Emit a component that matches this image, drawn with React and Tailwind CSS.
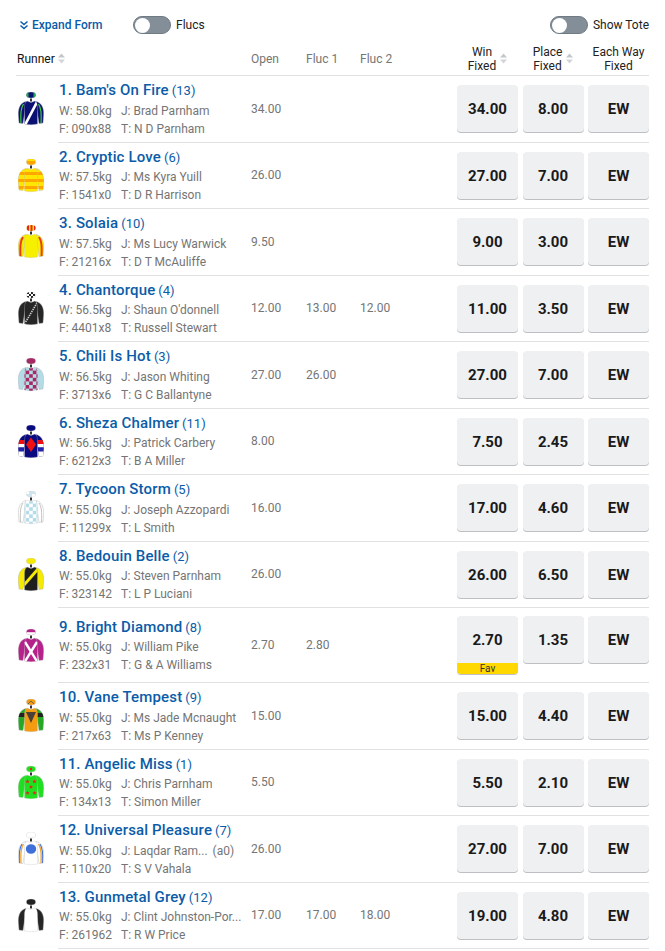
import React from "react";

const SLEEVE = "M8,9.5 C3,10.5 0.3,15 0.3,22 L1,31 L5,31.5 L7,18 Z";
const BODY = "M9,9 L13,10.5 L17,9 C18.5,10 19.5,12 19.5,15 L19.5,32 Q13,33.6 6.5,32 L6.5,15 C6.5,12 7.5,10 9,9 Z";

// check pattern for the jacket
const checks = (color) => {
  const cells = [];
  for (let y = 0; y < 7; y++) {
    for (let x = 0; x < 6; x++) {
      if ((x + y) % 2 === 0) {
        cells.push(<rect key={`${x}-${y}`} x={4 + x * 3.6} y={9 + y * 3.6} width="3.6" height="3.6" fill={color} />);
      }
    }
  }
  return cells;
};

const star = (cx, cy, key) => {
  const pts = [];
  for (let i = 0; i < 10; i++) {
    const r = i % 2 === 0 ? 2.3 : 1;
    const a = -Math.PI / 2 + (i * Math.PI) / 5;
    pts.push(`${cx + r * Math.cos(a)},${cy + r * Math.sin(a)}`);
  }
  return <polygon key={key} points={pts.join(" ")} fill="#e8231f" />;
};

const Silk = ({ id, cap, capTop, body, sleeve, bodyArt, sleeveArt }) => (
  <svg width="26" height="34" viewBox="0 0 26 34" className="shrink-0">
    <defs>
      <clipPath id={`body-${id}`}>
        <path d={BODY} />
      </clipPath>
      <clipPath id={`sleeve-${id}`}>
        <path d={SLEEVE} />
      </clipPath>
      <clipPath id={`cap-${id}`}>
        <ellipse cx="13" cy="3" rx="4.6" ry="3" />
      </clipPath>
    </defs>
    <ellipse cx="13" cy="3" rx="4.6" ry="3" fill={cap} stroke="#bbb" strokeWidth="0.3" />
    <g clipPath={`url(#cap-${id})`}>{capTop}</g>
    <rect x="12" y="6.5" width="2" height="3" fill="#333" />
    {[0, 1].map((side) => (
      <g key={side} transform={side ? "translate(26,0) scale(-1,1)" : undefined}>
        <path d={SLEEVE} fill={sleeve} stroke="#aaa" strokeWidth="0.4" />
        <g clipPath={`url(#sleeve-${id})`}>{sleeveArt}</g>
      </g>
    ))}
    <path d={BODY} fill={body} stroke="#bbb" strokeWidth="0.3" />
    <g clipPath={`url(#body-${id})`}>{bodyArt}</g>
  </svg>
);

const silks = {
  1: {
    cap: "#0a1172",
    capTop: <><rect x="8" y="0" width="2.5" height="6" fill="#22b14c" /><rect x="15.5" y="0" width="2.5" height="6" fill="#22b14c" /></>,
    body: "#0a1172",
    sleeve: "#0a1172",
    bodyArt: <line x1="19" y1="10" x2="7" y2="33" stroke="#fff" strokeWidth="2.6" />,
    sleeveArt: <path d="M5.5,12 C3,16 2.5,20 3,32" stroke="#3ecf3a" strokeWidth="1.2" fill="none" />,
  },
  2: {
    cap: "#ffa500",
    capTop: <rect x="8" y="0" width="10" height="2" fill="#ffe000" />,
    body: "#ffe600",
    sleeve: "#ffe600",
    bodyArt: <><rect x="4" y="13" width="18" height="3" fill="#ffa500" /><rect x="4" y="20" width="18" height="3" fill="#ffa500" /><rect x="4" y="27" width="18" height="3" fill="#ffa500" /></>,
    sleeveArt: <><rect x="0" y="13" width="8" height="3" fill="#ffa500" /><rect x="0" y="20" width="8" height="3" fill="#ffa500" /><rect x="0" y="27" width="8" height="3" fill="#ffa500" /></>,
  },
  3: {
    cap: "#ffe600",
    capTop: <><rect x="9" y="0" width="2" height="6" fill="#e8231f" /><rect x="12.5" y="0" width="2" height="6" fill="#e8231f" /><rect x="16" y="0" width="2" height="6" fill="#e8231f" /></>,
    body: "#f6f000",
    sleeve: "#f6f000",
    sleeveArt: <path d="M5,12 C2.5,16 2,20 2.5,32" stroke="#ee3a10" strokeWidth="2" fill="none" />,
  },
  4: {
    cap: "#fff",
    capTop: <><rect x="9" y="0" width="2" height="2" fill="#222" /><rect x="13" y="0" width="2" height="2" fill="#222" /><rect x="11" y="2" width="2" height="2" fill="#222" /><rect x="15" y="2" width="2" height="2" fill="#222" /><rect x="9" y="4" width="2" height="2" fill="#222" /><rect x="13" y="4" width="2" height="2" fill="#222" /></>,
    body: "#262626",
    sleeve: "#262626",
    bodyArt: <line x1="19" y1="11" x2="7" y2="31" stroke="#ccc" strokeWidth="1.6" strokeDasharray="1.4 0.9" />,
  },
  5: {
    cap: "#a52a63",
    body: "#b4dbe8",
    sleeve: "#b4dbe8",
    bodyArt: checks("#a52a63"),
  },
  6: {
    cap: "#0a0a80",
    body: "#0a0a80",
    sleeve: "#0a0a80",
    bodyArt: <polygon points="13,12.5 18,19.5 13,27 8,19.5" fill="#f01010" />,
    sleeveArt: <><rect x="0" y="15" width="8" height="4" fill="#f01010" /><rect x="0" y="19" width="8" height="3.5" fill="#fff" /><rect x="0" y="22.5" width="8" height="4" fill="#2222aa" /><rect x="0" y="26.5" width="8" height="6" fill="#fff" /></>,
  },
  7: {
    cap: "#cfe6f2",
    capTop: <><rect x="8" y="0" width="3" height="3" fill="#fff" /><rect x="14" y="3" width="3" height="3" fill="#fff" /></>,
    body: "#fff",
    sleeve: "#fff",
    bodyArt: checks("#b4dbe8"),
    sleeveArt: <path d="M5,12 C2.5,16 2,20 2.5,32" stroke="#bbb" strokeWidth="0.9" fill="none" />,
  },
  8: {
    cap: "#f6ea00",
    body: "#1e1e1e",
    sleeve: "#f6ea00",
    bodyArt: <line x1="20" y1="11" x2="6" y2="27" stroke="#f6ea00" strokeWidth="2.8" />,
  },
  9: {
    cap: "#b5238a",
    capTop: <rect x="8" y="3.2" width="10" height="3" fill="#fff" />,
    body: "#b5238a",
    sleeve: "#b5238a",
    bodyArt: <><line x1="7" y1="13" x2="20" y2="34" stroke="#fff" strokeWidth="2.4" /><line x1="19" y1="13" x2="6" y2="34" stroke="#fff" strokeWidth="2.4" /></>,
  },
  10: {
    cap: "#f39c12",
    capTop: <path d="M9,6 L13,2 L17,6" stroke="#555" strokeWidth="0.8" fill="none" />,
    body: "#f39c12",
    sleeve: "#26a826",
    bodyArt: <polygon points="8,13 18,13 13,24" fill="#4a4035" />,
    sleeveArt: <rect x="0" y="14" width="8" height="4" fill="#222" />,
  },
  11: {
    cap: "#1fe01f",
    capTop: <circle cx="13" cy="3" r="1.2" fill="#e8231f" />,
    body: "#1fe01f",
    sleeve: "#1fe01f",
    bodyArt: [star(9.5, 15.5, "a"), star(16.5, 15.5, "b"), star(13, 21, "c"), star(9.5, 27, "d"), star(16.5, 27, "e")],
  },
  12: {
    cap: "#fff",
    body: "#fff",
    sleeve: "#fff",
    bodyArt: <ellipse cx="13" cy="17" rx="5.2" ry="4.8" fill="#3f6fd8" />,
    sleeveArt: <><path d="M5.5,12 C3,16 2.5,20 3,32" stroke="#f3a024" strokeWidth="1.3" fill="none" /><path d="M4,12 C1.5,16 1,20 1.4,32" stroke="#3f6fd8" strokeWidth="1.1" fill="none" /></>,
  },
  13: {
    cap: "#222",
    body: "#fff",
    sleeve: "#262626",
  },
};

const runners = [
  { no: 1, name: "Bam's On Fire", barrier: 13, w: "58.0kg", j: "Brad Parnham", f: "090x88", t: "N D Parnham", open: "34.00", win: "34.00", place: "8.00" },
  { no: 2, name: "Cryptic Love", barrier: 6, w: "57.5kg", j: "Ms Kyra Yuill", f: "1541x0", t: "D R Harrison", open: "26.00", win: "27.00", place: "7.00" },
  { no: 3, name: "Solaia", barrier: 10, w: "57.5kg", j: "Ms Lucy Warwick", f: "21216x", t: "D T McAuliffe", open: "9.50", win: "9.00", place: "3.00" },
  { no: 4, name: "Chantorque", barrier: 4, w: "56.5kg", j: "Shaun O'donnell", f: "4401x8", t: "Russell Stewart", open: "12.00", fluc1: "13.00", fluc2: "12.00", win: "11.00", place: "3.50" },
  { no: 5, name: "Chili Is Hot", barrier: 3, w: "56.5kg", j: "Jason Whiting", f: "3713x6", t: "G C Ballantyne", open: "27.00", fluc1: "26.00", win: "27.00", place: "7.00" },
  { no: 6, name: "Sheza Chalmer", barrier: 11, w: "56.5kg", j: "Patrick Carbery", f: "6212x3", t: "B A Miller", open: "8.00", win: "7.50", place: "2.45" },
  { no: 7, name: "Tycoon Storm", barrier: 5, w: "55.0kg", j: "Joseph Azzopardi", f: "11299x", t: "L Smith", open: "16.00", win: "17.00", place: "4.60" },
  { no: 8, name: "Bedouin Belle", barrier: 2, w: "55.0kg", j: "Steven Parnham", f: "323142", t: "L P Luciani", open: "26.00", win: "26.00", place: "6.50" },
  { no: 9, name: "Bright Diamond", barrier: 8, w: "55.0kg", j: "William Pike", f: "232x31", t: "G & A Williams", open: "2.70", fluc1: "2.80", win: "2.70", place: "1.35", fav: true },
  { no: 10, name: "Vane Tempest", barrier: 9, w: "55.0kg", j: "Ms Jade Mcnaught", f: "217x63", t: "Ms P Kenney", open: "15.00", win: "15.00", place: "4.40" },
  { no: 11, name: "Angelic Miss", barrier: 1, w: "55.0kg", j: "Chris Parnham", f: "134x13", t: "Simon Miller", open: "5.50", win: "5.50", place: "2.10" },
  { no: 12, name: "Universal Pleasure", barrier: 7, w: "55.0kg", j: "Laqdar Ram...", extra: "(a0)", f: "110x20", t: "S V Vahala", open: "26.00", win: "27.00", place: "7.00" },
  { no: 13, name: "Gunmetal Grey", barrier: 12, w: "55.0kg", j: "Clint Johnston-Por...", f: "261962", t: "R W Price", open: "17.00", fluc1: "17.00", fluc2: "18.00", win: "19.00", place: "4.80" },
];

const SortIcon = () => (
  <svg width="7" height="11" viewBox="0 0 7 11" className="shrink-0">
    <polygon points="3.5,0.5 7,4.5 0,4.5" fill="#c4c7cb" />
    <polygon points="0,6.5 7,6.5 3.5,10.5" fill="#d3d5d8" />
  </svg>
);

const Toggle = ({ label }) => (
  <div className="flex items-center gap-[5px]">
    <div className="flex h-[18px] w-[38px] items-center rounded-full border border-[#6f7a84] bg-[#838e98] pl-px">
      <div className="h-[15px] w-[15px] rounded-full bg-white" />
    </div>
    <span className="text-[12px] text-[#222]">{label}</span>
  </div>
);

const OddsButton = ({ value, fav }) => (
  <button className="flex w-[61px] flex-col overflow-hidden rounded-[4px] bg-[#eff0f2] shadow-[0_1px_0_#bdbfc2]">
    <span className="flex h-[47px] w-full items-center justify-center pt-[2px] text-[15px] font-bold text-[#1a1a1a]">{value}</span>
    {fav && <span className="h-[11px] w-full bg-[#ffd800] text-[10px] leading-[11px] text-[#333]">Fav</span>}
  </button>
);

const RunnerRow = ({ r }) => (
  <div className="flex items-stretch">
    <div className="flex w-[42px] shrink-0 items-center pl-[2px]">
      <Silk id={r.no} {...silks[r.no]} />
    </div>
    <div className="flex flex-1 border-b border-[#e1e1e1]">
      <div className="flex w-[193px] shrink-0 flex-col justify-center pb-px pl-px">
        <div className="flex items-baseline pt-[1.5px] leading-[20px] text-[#0b5ca8]">
          <span className="text-[15px] font-medium tracking-[0.15px]">{r.no}. {r.name}</span>
          <span className="ml-[3px] text-[13px]">({r.barrier})</span>
        </div>
        <div className="mt-[0.5px] flex text-[12px] leading-[18px] text-[#757575]">
          <span className="w-[62px] shrink-0">W: {r.w}</span>
          <span className="whitespace-nowrap">J: {r.j}</span>
          {r.extra && <span className="ml-[5px]">{r.extra}</span>}
        </div>
        <div className="flex text-[12px] leading-[18px] text-[#757575]">
          <span className="w-[62px] shrink-0">F: {r.f}</span>
          <span className="whitespace-nowrap">T: {r.t}</span>
        </div>
      </div>
      <div className="flex w-[55px] shrink-0 items-center text-[12px] text-[#757575]">{r.open}</div>
      <div className="flex w-[54px] shrink-0 items-center text-[12px] text-[#757575]">{r.fluc1}</div>
      <div className="flex w-[97px] shrink-0 items-center text-[12px] text-[#757575]">{r.fluc2}</div>
      <div className={`flex items-start gap-[4.5px] ${r.fav ? "pb-[8px] pt-[8px]" : "pb-[9.5px] pt-[9px]"}`}>
        <OddsButton value={r.win} fav={r.fav} />
        <OddsButton value={r.place} />
        <OddsButton value="EW" />
      </div>
    </div>
  </div>
);

export default function App() {
  return (
    <div className="w-[665px] bg-white pl-[16px] pr-[16px] font-['Roboto',sans-serif]">
      <div className="flex h-[44px] items-center pt-[6px]">
        <div className="flex w-[117px] items-center gap-[3px] pl-[3px] text-[12px] font-medium text-[#0b5ca8]">
          <svg width="10" height="10" viewBox="0 0 10 10" fill="none" stroke="#0b5ca8" strokeWidth="1.5">
            <path d="M1.5,1.5 L5,4.5 L8.5,1.5" />
            <path d="M1.5,5.5 L5,8.5 L8.5,5.5" />
          </svg>
          <span>Expand Form</span>
        </div>
        <Toggle label="Flucs" />
        <div className="ml-auto">
          <Toggle label="Show Tote" />
        </div>
      </div>

      <div className="flex h-[32px] items-center border-b border-[#e1e1e1] pb-[2px] text-[12px] leading-[14px]">
        <div className="flex w-[235px] shrink-0 items-center gap-[3px] pl-px text-[#111]">
          Runner <SortIcon />
        </div>
        <div className="w-[55px] shrink-0 text-[#757575]">Open</div>
        <div className="w-[54px] shrink-0 text-[#757575]">Fluc 1</div>
        <div className="w-[97px] shrink-0 text-[#757575]">Fluc 2</div>
        <div className="flex gap-[4.5px] text-center text-[#222]">
          <div className="flex w-[61px] items-center justify-center gap-[4px]">
            <div>Win<br />Fixed</div>
            <SortIcon />
          </div>
          <div className="flex w-[61px] items-center justify-center gap-[4px]">
            <div>Place<br />Fixed</div>
            <SortIcon />
          </div>
          <div className="w-[61px] whitespace-nowrap">Each Way<br />Fixed</div>
        </div>
      </div>

      {runners.map((r) => (
        <RunnerRow key={r.no} r={r} />
      ))}
    </div>
  );
}
